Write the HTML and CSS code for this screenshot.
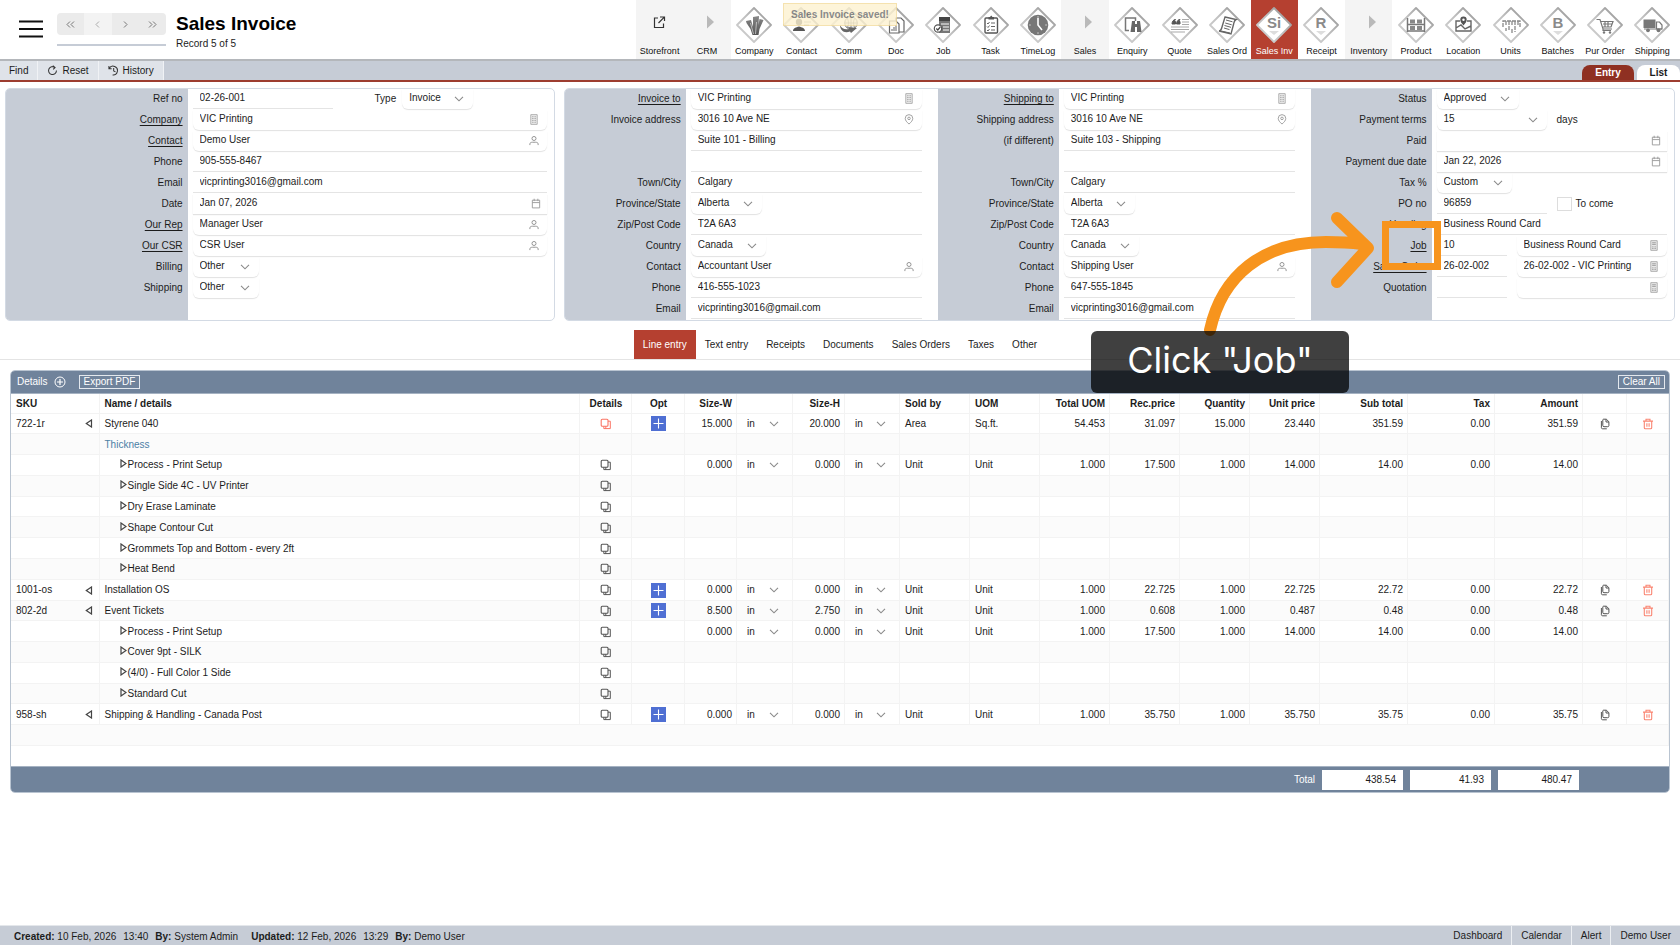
FILE: index.html
```html
<!DOCTYPE html>
<html lang="en">
<head>
<meta charset="utf-8">
<title>Sales Invoice</title>
<link rel="stylesheet" href="styles.css">
</head>
<body>
<svg class="defs" aria-hidden="true">
  <defs>
    <linearGradient id="edge" x1="0" y1="1" x2="1" y2="0"><stop offset="0" stop-color="#d2d2d2"/><stop offset=".5" stop-color="#c0c0c0"/><stop offset="1" stop-color="#8c8c8c"/></linearGradient>
    <linearGradient id="metal" x1="0" y1="0" x2="0" y2="1"><stop offset="0" stop-color="#888"/><stop offset="1" stop-color="#555"/></linearGradient>
    <symbol id="diamond" viewBox="0 0 36 36"><path d="M18 1 35 18 18 35 1 18z" fill="#fff" stroke="url(#edge)" stroke-width="1.800" stroke-linejoin="round"/></symbol>
    <symbol id="chev" viewBox="0 0 10 6"><path d="M1 .8 5 4.800 9 .8" fill="none" stroke="#8a8a8a" stroke-width="1.100"/></symbol>
    <symbol id="building" viewBox="0 0 10 12"><path d="M1.500.7h7v10.600h-7z" fill="#eee" stroke="#aaa"/><path d="M3 3h1.500M5.500 3H7M3 5h1.500M5.500 5H7M3 7h1.500M5.500 7H7M3 9h1.500M5.500 9H7" stroke="#999"/></symbol>
    <symbol id="person" viewBox="0 0 12 12"><circle cx="6" cy="3.800" r="2.200" fill="none" stroke="#8c8c8c"/><path d="M1.500 11V9.700C1.500 8.400 3 7.900 4.200 7.900h3.600c1.200 0 2.700.5 2.700 1.800V11" fill="none" stroke="#8c8c8c"/></symbol>
    <symbol id="calendar" viewBox="0 0 12 12"><path d="M2 2.400h8v8.400H2zM2 5h8M4 .8v2.600M8 .8v2.600" fill="none" stroke="#999"/></symbol>
    <symbol id="pin" viewBox="0 0 12 12"><path d="M6 11C3.500 8.700 1.900 7 1.900 4.800a4.100 4.100 0 0 1 8.200 0C10.100 7 8.500 8.700 6 11z" fill="none" stroke="#999"/><circle cx="6" cy="4.800" r="1.400" fill="none" stroke="#999"/></symbol>
    <symbol id="doc" viewBox="0 0 10 12"><path d="M1.500.7h7v10.600h-7z" fill="#e8e8e8" stroke="#aaa"/><path d="M3 3h4M3 4.800h4M3 7.500h1.500M5.500 7.500H7M3 9.300h1.500M5.500 9.300H7" stroke="#999"/></symbol>
    <symbol id="layers" viewBox="0 0 12 12"><rect x="1.200" y="1.200" width="6.800" height="7" rx="1" fill="none" stroke="currentColor" stroke-width="1.100"/><path d="M8 3.200h2.300v7.400H3.800V8.300M5.800 10.500V8.200" fill="none" stroke="currentColor" stroke-width="1"/></symbol>
    <symbol id="plus" viewBox="0 0 15 15"><path d="M0 0h15v15H0z" fill="#4f6fd3"/><path d="M7.500 2.500v10M2.500 7.500h10" stroke="#fff" stroke-width="1.100"/></symbol>
    <symbol id="copy" viewBox="0 0 12 12"><path d="M4.500 1.200h2.800l2.600 2.500v3.800c0 .8-.5 1.200-1.200 1.200H5c-.7 0-1.200-.4-1.200-1.200V2c0-.5.300-.8.700-.8zM7 1.300V4h2.800" fill="none" stroke="#555"/><path d="M2.400 3v6.600c0 .8.500 1.200 1.200 1.200h4.200" fill="none" stroke="#555"/></symbol>
    <symbol id="trash" viewBox="0 0 12 12"><path d="M1 3.100h10M4 3V1.200h4V3M2.300 3.100v6.700c0 .6.400 1 1 1h5.400c.6 0 1-.4 1-1V3.100M4.900 5.300v3.400M7.100 5.300v3.400" fill="none" stroke="#fa8572" stroke-width="1.100"/></symbol>
    <symbol id="tri-l" viewBox="0 0 8 9"><path d="M6.500 1v7L1.300 4.500z" fill="none" stroke="#444" stroke-width="1.200"/></symbol>
    <symbol id="tri-r" viewBox="0 0 7 9"><path d="M1 1v7l5-3.500z" fill="none" stroke="#444" stroke-width="1.200"/></symbol>
    <symbol id="tri-fill" viewBox="0 0 14 14"><path d="M7 .5v13L14 7z" fill="#b9b9b9"/></symbol>
  </defs>
</svg>

<header class="top">
  <button class="burger" aria-label="Menu"><svg viewBox="0 0 24 18"><path d="M0 1.500h24M0 9h24M0 16.500h24" stroke="#111" stroke-width="2"/></svg></button>
  <div class="pager">
    <div class="pager-buttons">
      <button aria-label="First"><svg viewBox="0 0 9 7"><path d="M4 .5 1 3.500l3 3M8 .5 5 3.500l3 3"/></svg></button>
      <button class="dim" aria-label="Previous"><svg viewBox="0 0 9 7"><path d="M6 .5 3 3.500l3 3"/></svg></button>
      <button aria-label="Next"><svg viewBox="0 0 9 7"><path d="m3 .5 3 3-3 3"/></svg></button>
      <button aria-label="Last"><svg viewBox="0 0 9 7"><path d="m1 .5 3 3-3 3M5 .5l3 3-3 3"/></svg></button>
    </div>
    <input class="pager-input" aria-label="Record number">
  </div>
  <div class="heading"><h1>Sales Invoice</h1><p>Record 5 of 5</p></div>
  <nav class="modules">
    <a href="#" class="group"><svg class="small" viewBox="0 0 14 14"><path d="M5 3H1.500v9.500h9V8.500M7 2h4.500v4M11.300 2.200 5.500 8" fill="none" stroke="#333" stroke-width="1.200"/></svg>Storefront</a>
    <a href="#" class="group"><svg class="small"><use href="#tri-fill"/></svg>CRM</a>
    <a href="#"><svg viewBox="0 0 36 36"><use href="#diamond"/><path d="m10 14 5-1 2 7 0-10 6-1-.5 9 1-6 4 1-4 9-1 6h-6l-2-6-4-6z" fill="url(#metal)"/><path d="m17.500 27-3-11M19.500 27l1-12" stroke="#ddd" stroke-width=".7"/></svg>Company</a>
    <a href="#"><svg viewBox="0 0 36 36"><use href="#diamond"/><circle cx="16" cy="15" r="3.200" fill="#555"/><path d="M10 24c0-3 3-3.500 6-4.500 3 1 6 1.500 6 4.500z" fill="#555"/><path d="M21 15h7M21 18h5" stroke="#aaa" stroke-width="1.200"/></svg>Contact</a>
    <a href="#"><svg viewBox="0 0 36 36"><use href="#diamond"/><circle cx="20" cy="16" r="6.300" fill="#eee" stroke="#777"/><path d="M14 16h12M20 10v12M16 11c2 3 2 7 0 10M24 11c-2 3-2 7 0 10" fill="none" stroke="#777" stroke-width=".8"/><path d="M9 18c2 4 5 5 9 4l-1-2 9 1-6 5-1-1.500C13 27 9 23 9 18z" fill="#666"/></svg>Comm</a>
    <a href="#"><svg viewBox="0 0 36 36"><use href="#diamond"/><path d="M18 11h5l3 3v11h-8z" fill="#fff" stroke="#666" stroke-width="1.200"/><path d="M11.500 14H18l3 3v9h-9.500z" fill="#fff" stroke="#666" stroke-width="1.200"/><path d="M14 24v-2M16 24v-4M18 24v-6" stroke="#666"/></svg>Doc</a>
    <a href="#"><svg viewBox="0 0 36 36"><use href="#diamond"/><path d="M14 10h11v16H14z" fill="#777"/><path d="M14 10h11v4H14z" fill="#444"/><path d="M16 17h8M18 20h6M18 23h6" stroke="#fff"/><circle cx="13" cy="21.500" r="3.700" fill="#fff" stroke="#555" stroke-width="1.200"/><path d="m11.300 21.500 1.500 1.500 2.500-3" fill="none" stroke="#444" stroke-width="1.200"/></svg>Job</a>
    <a href="#"><svg viewBox="0 0 36 36"><use href="#diamond"/><rect x="12" y="11" width="12.500" height="15" rx="1" fill="#fff" stroke="#555" stroke-width="1.400"/><path d="M15.500 12.500V10H17l1.200-1.500L19.500 10H21v2.500z" fill="#555"/><path d="m14 16 1 1 1.500-2M14 19.500l1 1 1.500-2M14 23l1 1 1.500-2M18 16h4M18 19.500h4M18 23h4" fill="none" stroke="#666"/></svg>Task</a>
    <a href="#"><svg viewBox="0 0 36 36"><use href="#diamond"/><circle cx="18" cy="18" r="10.300" fill="#777"/><path d="M18 11v7l4 5" fill="none" stroke="#fff" stroke-width="1.600"/><path d="M18 9.200v1.500M18 25.300v1.500M9.200 18h1.500M25.300 18h1.500" stroke="#ddd"/></svg>TimeLog</a>
    <a href="#" class="group"><svg class="small"><use href="#tri-fill"/></svg>Sales</a>
    <a href="#"><svg viewBox="0 0 36 36"><use href="#diamond"/><path d="M15 23.500h-3.500V11h10v3" fill="none" stroke="#777" stroke-width="1.500"/><path d="M18 14h3v3h2v-3h3l1.500 11H23v-5h-2v5h-4.500z" fill="#666"/></svg>Enquiry</a>
    <a href="#"><svg viewBox="0 0 36 36"><use href="#diamond"/><path d="M13.500 12.500c-2 0-3.500 2-3.500 4.500h3.500v-2.500h-1.500zM18 12.500c-2 0-3.500 2-3.500 4.500H18v-2.500h-1.500z" fill="#555" stroke="#555"/><path d="M20 12.500h7M20 15h7M20 17.500h7M9 20h18M9 22.500h18M9 25h14" stroke="#aaa" stroke-width="1.200"/></svg>Quote</a>
    <a href="#"><svg viewBox="0 0 36 36"><use href="#diamond"/><path d="m16 10 11 2.500c-2 1-2 3-2.500 5L22 27l-12-3c2 0 2.500-2 3-4z" fill="#fff" stroke="#666" stroke-width="1.400"/><path d="m10 23.500 11 2.500M17 13l6.500 1.800M16.200 16l6.500 1.800M15.500 18.500l6.500 1.800M15 21l5.500 1.600" stroke="#666"/></svg>Sales Ord</a>
    <a href="#" class="current"><svg viewBox="0 0 36 36"><use href="#diamond"/><text x="18" y="21" class="glyph">Si</text><path d="M13 24h10l-5 4z" fill="#ddd"/></svg>Sales Inv</a>
    <a href="#"><svg viewBox="0 0 36 36"><use href="#diamond"/><text x="18" y="21" class="glyph">R</text><path d="M13 24h10l-5 4z" fill="#ddd"/></svg>Receipt</a>
    <a href="#" class="group"><svg class="small"><use href="#tri-fill"/></svg>Inventory</a>
    <a href="#"><svg viewBox="0 0 36 36"><use href="#diamond"/><path d="M9.500 11v14M26.500 11v14M10 17.500h16M10 24h16" stroke="#777" stroke-width="1.500"/><path d="M12 12.500h5v4h-5zM19 12.500h5v4h-5zM12 19h5v4h-5zM19 19h5v4h-5z" fill="#888"/></svg>Product</a>
    <a href="#"><svg viewBox="0 0 36 36"><use href="#diamond"/><path d="M15 14h-4v10h15V14h-4M11 21l5-3 4 4 6-3" fill="none" stroke="#666" stroke-width="1.400"/><path d="M18.500 18.500c-2-2.500-3.200-4-3.200-5.800a3.200 3.200 0 0 1 6.400 0c0 1.800-1.200 3.300-3.200 5.800z" fill="#555"/><circle cx="18.500" cy="12.700" r="1.200" fill="#fff"/></svg>Location</a>
    <a href="#"><svg viewBox="0 0 36 36"><use href="#diamond"/><path d="M10 20v-6h17v6M13 14v4M16 14v10M19 14v5M22 14v11M25 14v4M13 21v3M19 22v4" fill="none" stroke="#888" stroke-width="1.300" stroke-dasharray="4 1"/></svg>Units</a>
    <a href="#"><svg viewBox="0 0 36 36"><use href="#diamond"/><text x="18" y="21" class="glyph">B</text><path d="M13 24h10l-5 4z" fill="#ddd"/></svg>Batches</a>
    <a href="#"><svg viewBox="0 0 36 36"><use href="#diamond"/><path d="M9.500 12.500H13l3 9.500h9M14 14.500h12l-2 5.500h-8M16 17h9M18 14v6M21 14v6M16 22v1.500h8" fill="none" stroke="#777" stroke-width="1.200"/><circle cx="17" cy="25.500" r="1.200" fill="#777"/><circle cx="23" cy="25.500" r="1.200" fill="#777"/></svg>Pur Order</a>
    <a href="#"><svg viewBox="0 0 36 36"><use href="#diamond"/><path d="M9.500 12.500h12V21h-12z" fill="#777"/><path d="M22.500 15h3l2.500 3v4h-5.500z" fill="#fff" stroke="#777" stroke-width="1.200"/><path d="M10 22h18" stroke="#777"/><circle cx="14" cy="23.300" r="1.900" fill="#777"/><circle cx="24.500" cy="23.300" r="1.900" fill="#777"/></svg>Shipping</a>
  </nav>
  <div class="toast" role="status">Sales Invoice saved!</div>
</header>

<div class="toolbar">
  <button>Find</button>
  <button><svg viewBox="0 0 12 12"><path d="M8.500 2.600A4.300 4.300 0 1 0 10.300 6M6.300.8l2.500 1.900-2 2" fill="none" stroke="#333" stroke-width="1.100"/></svg>Reset</button>
  <button><svg viewBox="0 0 12 12"><path d="M1 1v3h3M1.300 3.700A4.800 4.800 0 1 1 5 10.800M6.200 3.300v3.200l2 1" fill="none" stroke="#333" stroke-width="1.100"/></svg>History</button>
  <div class="views"><button class="on">Entry</button><button>List</button></div>
</div>

<main>
<form class="panels">
  <section class="panel first">
    <div class="block">
      <label for="ref">Ref no</label><div class="cell"><input class="w140" id="ref" value="02-26-001"><label class="inline type" for="type">Type</label><span class="pick w71"><select id="type"><option>Invoice</option></select><svg><use href="#chev"/></svg></span></div>
      <label for="company"><a href="#">Company</a></label><div class="cell"><span class="look"><input id="company" value="VIC Printing"><svg><use href="#building"/></svg></span></div>
      <label for="contact"><a href="#">Contact</a></label><div class="cell"><span class="look"><input id="contact" value="Demo User"><svg><use href="#person"/></svg></span></div>
      <label for="phone">Phone</label><div class="cell"><input id="phone" value="905-555-8467"></div>
      <label for="email">Email</label><div class="cell"><input id="email" value="vicprinting3016@gmail.com"></div>
      <label for="date">Date</label><div class="cell"><span class="look date"><input id="date" value="Jan 07, 2026"><svg><use href="#calendar"/></svg></span></div>
      <label for="rep"><a href="#">Our Rep</a></label><div class="cell"><span class="look"><input id="rep" value="Manager User"><svg><use href="#person"/></svg></span></div>
      <label for="csr"><a href="#">Our CSR</a></label><div class="cell"><span class="look"><input id="csr" value="CSR User"><svg><use href="#person"/></svg></span></div>
      <label for="billing">Billing</label><div class="cell"><span class="pick w66"><select id="billing"><option>Other</option></select><svg><use href="#chev"/></svg></span></div>
      <label for="ship">Shipping</label><div class="cell"><span class="pick w66"><select id="ship"><option>Other</option></select><svg><use href="#chev"/></svg></span></div>
      <span class="blank"></span><span></span>
    </div>
  </section>
  <section class="panel second">
    <div class="block wide">
      <label for="ito"><a href="#">Invoice to</a></label><div class="cell"><span class="look"><input id="ito" value="VIC Printing"><svg><use href="#building"/></svg></span></div>
      <label for="iad">Invoice address</label><div class="cell"><span class="look"><input id="iad" value="3016 10 Ave NE"><svg><use href="#pin"/></svg></span></div>
      <span class="blank"></span><div class="cell"><input aria-label="Invoice address line 2" value="Suite 101 - Billing"></div>
      <span class="blank"></span><div class="cell"><input aria-label="Invoice address line 3"></div>
      <label for="itown">Town/City</label><div class="cell"><input id="itown" value="Calgary"></div>
      <label for="iprov">Province/State</label><div class="cell"><span class="pick w71"><select id="iprov"><option>Alberta</option></select><svg><use href="#chev"/></svg></span></div>
      <label for="izip">Zip/Post Code</label><div class="cell"><input id="izip" value="T2A 6A3"></div>
      <label for="ictry">Country</label><div class="cell"><span class="pick w75"><select id="ictry"><option>Canada</option></select><svg><use href="#chev"/></svg></span></div>
      <label for="icon">Contact</label><div class="cell"><span class="look"><input id="icon" value="Accountant User"><svg><use href="#person"/></svg></span></div>
      <label for="iph">Phone</label><div class="cell"><input id="iph" value="416-555-1023"></div>
      <label for="iem">Email</label><div class="cell"><input id="iem" value="vicprinting3016@gmail.com"></div>
    </div>
    <div class="block wide">
      <label for="sto"><a href="#">Shipping to</a></label><div class="cell"><span class="look"><input id="sto" value="VIC Printing"><svg><use href="#building"/></svg></span></div>
      <label for="sad">Shipping address</label><div class="cell"><span class="look"><input id="sad" value="3016 10 Ave NE"><svg><use href="#pin"/></svg></span></div>
      <label for="sad2">(if different)</label><div class="cell"><input id="sad2" value="Suite 103 - Shipping"></div>
      <span class="blank"></span><div class="cell"><input aria-label="Shipping address line 3"></div>
      <label for="stown">Town/City</label><div class="cell"><input id="stown" value="Calgary"></div>
      <label for="sprov">Province/State</label><div class="cell"><span class="pick w71"><select id="sprov"><option>Alberta</option></select><svg><use href="#chev"/></svg></span></div>
      <label for="szip">Zip/Post Code</label><div class="cell"><input id="szip" value="T2A 6A3"></div>
      <label for="sctry">Country</label><div class="cell"><span class="pick w75"><select id="sctry"><option>Canada</option></select><svg><use href="#chev"/></svg></span></div>
      <label for="scon">Contact</label><div class="cell"><span class="look"><input id="scon" value="Shipping User"><svg><use href="#person"/></svg></span></div>
      <label for="sph">Phone</label><div class="cell"><input id="sph" value="647-555-1845"></div>
      <label for="sem">Email</label><div class="cell"><input id="sem" value="vicprinting3016@gmail.com"></div>
    </div>
    <div class="block last">
      <label for="status">Status</label><div class="cell"><span class="pick w82"><select id="status"><option>Approved</option></select><svg><use href="#chev"/></svg></span></div>
      <label for="terms">Payment terms</label><div class="cell"><span class="pick w110"><select id="terms"><option>15</option></select><svg><use href="#chev"/></svg></span><span class="unit">days</span></div>
      <label for="paid">Paid</label><div class="cell"><span class="look date"><input id="paid"><svg><use href="#calendar"/></svg></span></div>
      <label for="due">Payment due date</label><div class="cell"><span class="look date"><input id="due" value="Jan 22, 2026"><svg><use href="#calendar"/></svg></span></div>
      <label for="tax">Tax %</label><div class="cell"><span class="pick w75"><select id="tax"><option>Custom</option></select><svg><use href="#chev"/></svg></span></div>
      <label for="po">PO no</label><div class="cell"><input class="w110" id="po" value="96859"><input type="checkbox" id="tocome"><label class="inline" for="tocome">To come</label></div>
      <label for="head">Heading</label><div class="cell"><input id="head" value="Business Round Card"></div>
      <label for="job"><a href="#">Job</a></label><div class="cell pair"><input class="w70" id="job" value="10"><span class="look"><input aria-label="Job name" value="Business Round Card"><svg><use href="#doc"/></svg></span></div>
      <label for="so"><a href="#">Sales Order</a></label><div class="cell pair"><input class="w70" id="so" value="26-02-002"><span class="look"><input aria-label="Sales order name" value="26-02-002 - VIC Printing"><svg><use href="#doc"/></svg></span></div>
      <label for="quo">Quotation</label><div class="cell pair"><input class="w70" id="quo"><span class="look"><input aria-label="Quotation name"><svg><use href="#doc"/></svg></span></div>
      <span class="blank"></span><span></span>
    </div>
  </section>
</form>

<nav class="tabs">
  <a href="#" class="on">Line entry</a><a href="#">Text entry</a><a href="#">Receipts</a><a href="#">Documents</a><a href="#">Sales Orders</a><a href="#">Taxes</a><a href="#">Other</a>
</nav>

<section class="lines">
  <div class="lines-head">
    <span>Details</span>
    <button class="add" aria-label="Add line"><svg viewBox="0 0 12 12"><circle cx="6" cy="6" r="5" fill="none" stroke="#fff"/><path d="M6 3v6M3 6h6" stroke="#fff" stroke-width="1.200"/></svg></button>
    <button class="boxed">Export PDF</button>
    <button class="boxed end">Clear All</button>
  </div>
  <table>
    <colgroup><col class="c88"><col><col class="c52"><col class="c53"><col class="c52"><col class="c56"><col class="c52"><col class="c55"><col class="c70"><col class="c70"><col class="c70"><col class="c70"><col class="c70"><col class="c70"><col class="c88"><col class="c87"><col class="c88"><col class="c44"><col class="c42"></colgroup>
    <thead><tr><th>SKU</th><th>Name / details</th><th class="m">Details</th><th class="m">Opt</th><th class="r">Size-W</th><th></th><th class="r">Size-H</th><th></th><th>Sold by</th><th>UOM</th><th class="r">Total UOM</th><th class="r">Rec.price</th><th class="r">Quantity</th><th class="r">Unit price</th><th class="r">Sub total</th><th class="r">Tax</th><th class="r">Amount</th><th></th><th></th></tr></thead>
    <tbody>
      <tr><td><div class="sku">722-1r<svg><use href="#tri-l"/></svg></div></td><td>Styrene 040</td><td class="m"><svg class="ic hot"><use href="#layers"/></svg></td><td class="m"><svg class="opt"><use href="#plus"/></svg></td><td class="r">15.000</td><td><span class="dim-pick"><select aria-label="Width unit"><option>in</option></select><svg><use href="#chev"/></svg></span></td><td class="r">20.000</td><td><span class="dim-pick"><select aria-label="Height unit"><option>in</option></select><svg><use href="#chev"/></svg></span></td><td>Area</td><td>Sq.ft.</td><td class="r">54.453</td><td class="r">31.097</td><td class="r">15.000</td><td class="r">23.440</td><td class="r">351.59</td><td class="r">0.00</td><td class="r">351.59</td><td class="m"><svg class="ic"><use href="#copy"/></svg></td><td class="m"><svg class="ic"><use href="#trash"/></svg></td></tr>
      <tr><td></td><td class="note">Thickness</td><td></td><td></td><td></td><td></td><td></td><td></td><td></td><td></td><td></td><td></td><td></td><td></td><td></td><td></td><td></td><td></td><td></td></tr>
      <tr><td></td><td class="sub"><svg><use href="#tri-r"/></svg>Process - Print Setup</td><td class="m"><svg class="ic"><use href="#layers"/></svg></td><td></td><td class="r">0.000</td><td><span class="dim-pick"><select aria-label="Width unit"><option>in</option></select><svg><use href="#chev"/></svg></span></td><td class="r">0.000</td><td><span class="dim-pick"><select aria-label="Height unit"><option>in</option></select><svg><use href="#chev"/></svg></span></td><td>Unit</td><td>Unit</td><td class="r">1.000</td><td class="r">17.500</td><td class="r">1.000</td><td class="r">14.000</td><td class="r">14.00</td><td class="r">0.00</td><td class="r">14.00</td><td></td><td></td></tr>
      <tr><td></td><td class="sub"><svg><use href="#tri-r"/></svg>Single Side 4C - UV Printer</td><td class="m"><svg class="ic"><use href="#layers"/></svg></td><td></td><td></td><td></td><td></td><td></td><td></td><td></td><td></td><td></td><td></td><td></td><td></td><td></td><td></td><td></td><td></td></tr>
      <tr><td></td><td class="sub"><svg><use href="#tri-r"/></svg>Dry Erase Laminate</td><td class="m"><svg class="ic"><use href="#layers"/></svg></td><td></td><td></td><td></td><td></td><td></td><td></td><td></td><td></td><td></td><td></td><td></td><td></td><td></td><td></td><td></td><td></td></tr>
      <tr><td></td><td class="sub"><svg><use href="#tri-r"/></svg>Shape Contour Cut</td><td class="m"><svg class="ic"><use href="#layers"/></svg></td><td></td><td></td><td></td><td></td><td></td><td></td><td></td><td></td><td></td><td></td><td></td><td></td><td></td><td></td><td></td><td></td></tr>
      <tr><td></td><td class="sub"><svg><use href="#tri-r"/></svg>Grommets Top and Bottom - every 2ft</td><td class="m"><svg class="ic"><use href="#layers"/></svg></td><td></td><td></td><td></td><td></td><td></td><td></td><td></td><td></td><td></td><td></td><td></td><td></td><td></td><td></td><td></td><td></td></tr>
      <tr><td></td><td class="sub"><svg><use href="#tri-r"/></svg>Heat Bend</td><td class="m"><svg class="ic"><use href="#layers"/></svg></td><td></td><td></td><td></td><td></td><td></td><td></td><td></td><td></td><td></td><td></td><td></td><td></td><td></td><td></td><td></td><td></td></tr>
      <tr><td><div class="sku">1001-os<svg><use href="#tri-l"/></svg></div></td><td>Installation OS</td><td class="m"><svg class="ic"><use href="#layers"/></svg></td><td class="m"><svg class="opt"><use href="#plus"/></svg></td><td class="r">0.000</td><td><span class="dim-pick"><select aria-label="Width unit"><option>in</option></select><svg><use href="#chev"/></svg></span></td><td class="r">0.000</td><td><span class="dim-pick"><select aria-label="Height unit"><option>in</option></select><svg><use href="#chev"/></svg></span></td><td>Unit</td><td>Unit</td><td class="r">1.000</td><td class="r">22.725</td><td class="r">1.000</td><td class="r">22.725</td><td class="r">22.72</td><td class="r">0.00</td><td class="r">22.72</td><td class="m"><svg class="ic"><use href="#copy"/></svg></td><td class="m"><svg class="ic"><use href="#trash"/></svg></td></tr>
      <tr><td><div class="sku">802-2d<svg><use href="#tri-l"/></svg></div></td><td>Event Tickets</td><td class="m"><svg class="ic"><use href="#layers"/></svg></td><td class="m"><svg class="opt"><use href="#plus"/></svg></td><td class="r">8.500</td><td><span class="dim-pick"><select aria-label="Width unit"><option>in</option></select><svg><use href="#chev"/></svg></span></td><td class="r">2.750</td><td><span class="dim-pick"><select aria-label="Height unit"><option>in</option></select><svg><use href="#chev"/></svg></span></td><td>Unit</td><td>Unit</td><td class="r">1.000</td><td class="r">0.608</td><td class="r">1.000</td><td class="r">0.487</td><td class="r">0.48</td><td class="r">0.00</td><td class="r">0.48</td><td class="m"><svg class="ic"><use href="#copy"/></svg></td><td class="m"><svg class="ic"><use href="#trash"/></svg></td></tr>
      <tr><td></td><td class="sub"><svg><use href="#tri-r"/></svg>Process - Print Setup</td><td class="m"><svg class="ic"><use href="#layers"/></svg></td><td></td><td class="r">0.000</td><td><span class="dim-pick"><select aria-label="Width unit"><option>in</option></select><svg><use href="#chev"/></svg></span></td><td class="r">0.000</td><td><span class="dim-pick"><select aria-label="Height unit"><option>in</option></select><svg><use href="#chev"/></svg></span></td><td>Unit</td><td>Unit</td><td class="r">1.000</td><td class="r">17.500</td><td class="r">1.000</td><td class="r">14.000</td><td class="r">14.00</td><td class="r">0.00</td><td class="r">14.00</td><td></td><td></td></tr>
      <tr><td></td><td class="sub"><svg><use href="#tri-r"/></svg>Cover 9pt - SILK</td><td class="m"><svg class="ic"><use href="#layers"/></svg></td><td></td><td></td><td></td><td></td><td></td><td></td><td></td><td></td><td></td><td></td><td></td><td></td><td></td><td></td><td></td><td></td></tr>
      <tr><td></td><td class="sub"><svg><use href="#tri-r"/></svg>(4/0) - Full Color 1 Side</td><td class="m"><svg class="ic"><use href="#layers"/></svg></td><td></td><td></td><td></td><td></td><td></td><td></td><td></td><td></td><td></td><td></td><td></td><td></td><td></td><td></td><td></td><td></td></tr>
      <tr><td></td><td class="sub"><svg><use href="#tri-r"/></svg>Standard Cut</td><td class="m"><svg class="ic"><use href="#layers"/></svg></td><td></td><td></td><td></td><td></td><td></td><td></td><td></td><td></td><td></td><td></td><td></td><td></td><td></td><td></td><td></td><td></td></tr>
      <tr><td><div class="sku">958-sh<svg><use href="#tri-l"/></svg></div></td><td>Shipping &amp; Handling - Canada Post</td><td class="m"><svg class="ic"><use href="#layers"/></svg></td><td class="m"><svg class="opt"><use href="#plus"/></svg></td><td class="r">0.000</td><td><span class="dim-pick"><select aria-label="Width unit"><option>in</option></select><svg><use href="#chev"/></svg></span></td><td class="r">0.000</td><td><span class="dim-pick"><select aria-label="Height unit"><option>in</option></select><svg><use href="#chev"/></svg></span></td><td>Unit</td><td>Unit</td><td class="r">1.000</td><td class="r">35.750</td><td class="r">1.000</td><td class="r">35.750</td><td class="r">35.75</td><td class="r">0.00</td><td class="r">35.75</td><td class="m"><svg class="ic"><use href="#copy"/></svg></td><td class="m"><svg class="ic"><use href="#trash"/></svg></td></tr>
      <tr><td colspan="19"></td></tr>
    </tbody>
  </table>
  <div class="totals">
    <span>Total</span>
    <output>438.54</output><output>41.93</output><output>480.47</output>
  </div>
</section>
</main>

<footer class="status">
  <span><b>Created:</b> 10 Feb, 2026</span><span>13:40</span><span class="by"><b>By:</b> System Admin</span>
  <span><b>Updated:</b> 12 Feb, 2026</span><span>13:29</span><span><b>By:</b> Demo User</span>
  <nav><a href="#">Dashboard</a><a href="#">Calendar</a><a href="#">Alert</a><a href="#">Demo User</a></nav>
</footer>

<svg class="arrow" viewBox="0 0 180 140" aria-hidden="true"><path d="M10 130C22 76 62 42 126 42Q146 42 162 44M137 18 168 48 137 82" fill="none" stroke="#f7941d" stroke-width="12" stroke-linecap="round" stroke-linejoin="round"/></svg>
<div class="focus"></div>
<div class="callout">Click "Job"</div>
</body>
</html>
```
FILE: styles.css
```css
* { box-sizing: border-box; }
body {
  margin: 0;
  min-height: 100vh;
  display: flex;
  flex-direction: column;
  position: relative;
  background: #fff;
  color: #1c1c1c;
  font: 10px/14px "Liberation Sans", Arial, sans-serif;
}
button, input, select { font: inherit; color: inherit; margin: 0; padding: 0; border: 0; background: none; }
a { color: inherit; text-decoration: none; }
h1, p { margin: 0; }
svg { display: block; }
.defs { position: absolute; width: 0; height: 0; }

/* header */
.top { position: relative; display: flex; height: 61px; border-bottom: 2px solid #b4b7bb; }
.burger { width: 24px; margin: 20px 14px 0 19px; align-self: flex-start; }
.burger svg { width: 24px; height: 18px; }
.pager { width: 109px; margin: 13px 10px 0 0; }
.pager-buttons { display: flex; height: 22px; border-radius: 4px; overflow: hidden; background: #ebebeb; }
.pager-buttons button { flex: 1; display: flex; align-items: center; justify-content: center; }
.pager-buttons .dim { background: #f3f3f3; }
.pager-buttons svg { width: 9px; height: 7px; fill: none; stroke: #777; }
.pager-buttons .dim svg { stroke: #aaa; }
.pager-input { display: block; width: 100%; height: 11px; border-bottom: 2px solid #c6ccd6; }
.heading { padding-top: 13px; }
.heading h1 { font-size: 19px; line-height: 22px; color: #000; }
.heading p { padding-top: 2px; }
.modules { display: grid; grid-template-columns: repeat(22, 1fr); width: 1040px; margin: 0 4px 0 auto; }
.modules a { display: flex; flex-direction: column; align-items: center; padding-top: 7px; font-size: 9px; line-height: 14px; white-space: nowrap; color: #111; }
.modules svg { width: 36px; height: 36px; margin-bottom: 1px; flex: none; }
.modules svg.small { width: 14px; height: 14px; margin: 8px 0 15px; }
.modules .group { background: #f4f4f4; }
.modules .current { background: #b54030; color: #fff; }
.glyph { font: bold 15px "Liberation Sans", Arial, sans-serif; fill: #8a8a8a; text-anchor: middle; }
.toast { position: absolute; left: 783px; top: 3px; width: 114px; height: 23px; text-align: center; font-weight: bold; line-height: 21px; color: #6d6d6d; background: #fdf2d0; border: 1px solid #f3dc9c; opacity: .8; }

/* toolbar */
.toolbar { display: flex; height: 21px; background: #c6ccd6; border-bottom: 2px solid #9d3d30; }
.toolbar > button { display: flex; align-items: center; gap: 4px; padding: 0 9px; background: #dfe3e9; border-right: 1px solid #f0f2f5; }
.toolbar svg { width: 11px; height: 11px; }
.views { display: flex; gap: 3px; margin-left: auto; align-items: flex-end; font-weight: bold; }
.views button { width: 43px; height: 15px; background: #fff; border-radius: 8px 8px 0 0; }
.views .on { width: 52px; background: #8f3022; color: #fff; }

/* form panels */
.panels { display: flex; gap: 9px; padding: 6px 5px 0; }
.panel { display: flex; border: 1px solid #d3dae4; border-radius: 5px; overflow: hidden; }
.first { flex: 549 1 0; }
.second { flex: 1112 1 0; }
.block { flex: 1; display: grid; grid-auto-rows: 21px; grid-template-columns: 182fr 367fr; }
.block.wide { flex: 374 1 0; grid-template-columns: 121fr 252fr; }
.block.last { flex: 364 1 0; grid-template-columns: 121fr 243fr; }
.block > label, .blank { background: #c6ccd6; text-align: right; padding: 3px 5px 0 0; }
.block > label a { text-decoration: underline; text-underline-offset: 2px; }
.cell { display: flex; padding: 0 7px 1px 5px; min-width: 0; }
.wide .cell { padding-right: 16px; }
.cell input { width: 100%; min-width: 0; padding: 0 7px 1px; border-bottom: 1px solid #e4e4e4; }
.look { position: relative; flex: 1; display: flex; border-radius: 0 0 6px 6px; box-shadow: 0 1px 1px #e2e2e2; }
.cell .look input { border: 0; padding-bottom: 2px; }
.look.date { border-radius: 0; }
.look svg { position: absolute; right: 7px; top: 4px; width: 12px; height: 11px; }
.look.date svg { right: 5px; }
.pick { position: relative; display: flex; border-radius: 0 0 6px 6px; box-shadow: 0 1px 1px #e2e2e2; }
.pick select, .dim-pick select { appearance: none; width: 100%; padding-left: 7px; }
.pick select { padding-bottom: 2px; }
.pick svg { position: absolute; right: 9px; top: 7px; width: 10px; height: 6px; pointer-events: none; }
.cell input.w140 { width: 140px; }
.cell input.w110 { width: 110px; }
.cell input.w70 { width: 70px; flex: none; }
.w66 { width: 66px; }
.w71 { width: 71px; }
.w75 { width: 75px; }
.w82 { width: 82px; }
.w110 { width: 110px; }
.pair { gap: 10px; }
.inline { line-height: 19px; }
.inline.type { margin: 0 6px 0 42px; }
.unit { margin-left: 10px; line-height: 19px; }
.cell input[type="checkbox"] { appearance: none; flex: none; width: 15px; height: 14px; margin: 3px 4px 0 10px; padding: 0; border: 1px solid #ddd; background: #fff; }

/* section tabs */
.tabs { display: flex; justify-content: center; margin-top: 9px; border-bottom: 1px solid #e4e4e4; }
.tabs a { padding: 8px 9px 7px; }
.tabs .on { background: #b54030; color: #fff; }

/* line items */
.lines { margin: 10px; border: 1px solid #b9c4d1; border-radius: 5px; overflow: hidden; }
.lines-head { display: flex; align-items: center; height: 23px; padding: 0 4px 0 6px; background: #70839b; color: #fff; border-bottom: 1px solid #a5b2c2; }
.add { margin: 0 13px 0 6px; }
.add svg { width: 12px; height: 12px; }
.boxed { height: 14px; padding: 0 4px; line-height: 12px; border: 1px solid #e3e8ee; }
.boxed.end { margin-left: auto; }
table { width: 100%; height: 352px; table-layout: fixed; border-collapse: collapse; }
th, td { padding: 1px 4px 0 5px; text-align: left; border-right: 1px solid #f3f3f3; border-bottom: 1px solid #f3f3f3; white-space: nowrap; }
thead tr { height: 19px; }
tbody tr { height: 20px; }
tbody tr:nth-child(even) { background: #fbfbfb; }
.r { text-align: right; }
.m { text-align: center; }
.note { color: #4c80a5; }
td.sub { padding-left: 20px; }
.sub svg { display: inline-block; width: 7px; height: 9px; margin-right: 1px; }
.sku { display: flex; align-items: center; justify-content: space-between; padding-right: 2px; }
.sku svg { width: 8px; height: 9px; }
.ic { width: 12px; height: 12px; margin: 0 auto; color: #555; }
.ic.hot { color: #fa7464; }
.opt { width: 15px; height: 15px; margin: 0 auto; }
.dim-pick { position: relative; display: block; }
.dim-pick select { display: block; height: 14px; padding-left: 5px; }
.dim-pick svg { position: absolute; right: 9px; top: 4px; width: 10px; height: 6px; pointer-events: none; }
.c42 { width: 42px; } .c44 { width: 44px; } .c52 { width: 52px; } .c53 { width: 53px; } .c55 { width: 55px; }
.c56 { width: 56px; } .c70 { width: 70px; } .c87 { width: 87px; } .c88 { width: 88px; }
.totals { display: flex; align-items: center; justify-content: flex-end; gap: 7px; height: 26px; margin-top: 20px; padding-right: 90px; background: #70839b; color: #fff; border-top: 1px solid #a5b2c2; }
.totals output { width: 81px; height: 20px; padding-right: 7px; line-height: 20px; text-align: right; background: #fff; color: #1c1c1c; }

/* footer */
.status { display: flex; height: 20px; margin-top: auto; padding-left: 14px; gap: 7px; line-height: 21px; background: #c6ccd6; border-top: 1px solid #e4e7eb; }
.status .by { margin-right: 6px; }
.status nav { display: flex; margin-left: auto; }
.status nav a { padding: 0 9px; border-left: 1px solid #eceff2; line-height: 20px; }
.status nav a:first-child { border: 0; }

/* guide overlay */
.arrow { position: absolute; left: 1200px; top: 200px; width: 180px; height: 140px; }
.focus { position: absolute; left: 1382px; top: 221px; width: 59px; height: 49px; border: 7px solid #f7941d; }
.callout { position: absolute; left: 1091px; top: 331px; width: 258px; height: 62px; border-radius: 6px; background: rgba(0, 0, 0, .75); color: #fff; font: 36px/58px Inter, sans-serif; text-align: center; }
```
